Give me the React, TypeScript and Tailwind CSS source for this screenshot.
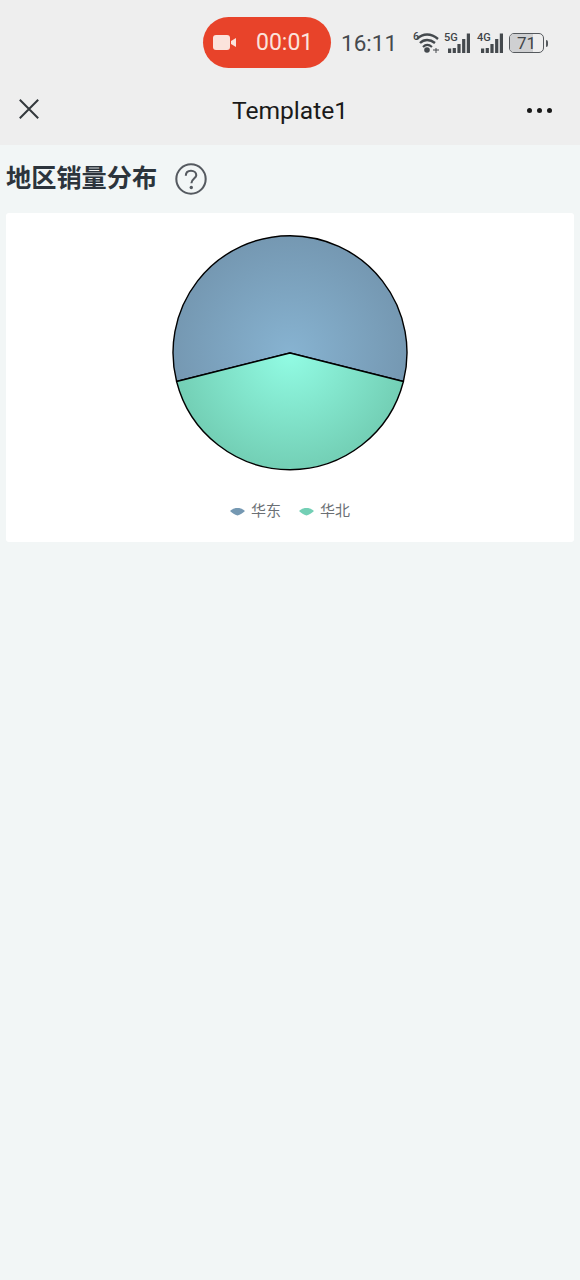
const cjk = "font-['Roboto','Noto_Sans_CJK_SC',sans-serif]";

function SignalBars({ label }: { label: string }) {
  return (
    <div className="relative h-[20px] w-[26px]">
      <span className="absolute left-0 top-[-1px] font-['Roboto',sans-serif] text-[11px] font-medium leading-[12px] text-[#3f4448]">
        {label}
      </span>
      <svg width="26" height="20" viewBox="0 0 26 20" className="absolute left-0 top-0">
        <rect x="4" y="15.5" width="3.2" height="4.5" fill="#44494d" />
        <rect x="8.7" y="15" width="3.2" height="5" fill="#44494d" />
        <rect x="13.4" y="11" width="3.2" height="9" fill="#44494d" />
        <rect x="18.1" y="6" width="3.2" height="14" fill="#44494d" />
        <rect x="22.8" y="0.5" width="3.2" height="19.5" fill="#44494d" />
      </svg>
    </div>
  );
}

function StatusBar() {
  return (
    <div className="flex h-[80px] items-start bg-[#eeeeee] pl-[203px] pt-[17px]">
      <div className="flex h-[51px] w-[128px] items-center rounded-full bg-[#e8432a] pl-[10px]">
        <svg width="24" height="18" viewBox="0 0 24 18">
          <rect x="0" y="1" width="17" height="15" rx="3" fill="#fbe3dc" />
          <path d="M18 7 L23 4 V13 L18 10 Z" fill="#fbe3dc" />
        </svg>
        <span className="ml-[19px] font-['Roboto',sans-serif] text-[23px] leading-none text-[#fbe3dc]">00:01</span>
      </div>
      <span className="ml-[10px] mt-[13px] font-['Roboto',sans-serif] text-[22.5px] leading-[26px] text-[#45494d]">16:11</span>
      <div className="ml-[16px] mt-[16px] flex items-center">
        <div className="relative h-[20px] w-[26px]">
          <span className="absolute left-0 top-[-2px] font-['Roboto',sans-serif] text-[11px] font-medium leading-[12px] text-[#3f4448]">6</span>
          <svg width="26" height="20" viewBox="0 0 26 20" className="absolute left-0 top-0">
            <path d="M4 6 C10 0 18 0 25 6" fill="none" stroke="#44494d" strokeWidth="2.4" />
            <path d="M7 10 C11 6 17 6 22 10" fill="none" stroke="#44494d" strokeWidth="2.4" />
            <path d="M10 14 C12.5 11.5 16 11.5 19 14" fill="none" stroke="#44494d" strokeWidth="2.2" />
            <circle cx="14" cy="17" r="2.8" fill="#44494d" />
            <path d="M20 17 h6 M23 15 v5" stroke="#44494d" strokeWidth="1" />
          </svg>
        </div>
        <div className="ml-[5px]">
          <SignalBars label="5G" />
        </div>
        <div className="ml-[7px]">
          <SignalBars label="4G" />
        </div>
        <div className="ml-[6px] flex items-center">
          <div className="relative flex h-[20px] w-[35px] items-center justify-center overflow-hidden rounded-[5px] border-[1.5px] border-[#55595d] bg-[#eeeeee]">
            <div className="absolute bottom-0 left-0 top-0 w-[71%] bg-[#cfd0d2]" />
            <span className="relative font-['Roboto',sans-serif] text-[17px] leading-none text-[#3f4448]">71</span>
          </div>
          <div className="ml-[2px] h-[7px] w-[2px] rounded-r-sm bg-[#55595d]" />
        </div>
      </div>
    </div>
  );
}

function NavBar() {
  return (
    <div className="flex h-[65px] items-start justify-between bg-[#eeeeee] pl-[19px] pr-[28px] pt-[19px]">
      <svg width="20" height="20" viewBox="0 0 20 20">
        <path d="M0.8 0.8 L19.2 19.2 M19.2 0.8 L0.8 19.2" fill="none" stroke="#33383c" strokeWidth="2" />
      </svg>
      <span className="ml-[14px] mt-[1px] font-['Roboto',sans-serif] text-[24.6px] leading-[22px] text-[#1a1a1a]">Template1</span>
      <div className="mt-[9px] flex gap-[5px]">
        <div className="h-[5px] w-[5px] rounded-full bg-[#1a1a1a]" />
        <div className="h-[5px] w-[5px] rounded-full bg-[#1a1a1a]" />
        <div className="h-[5px] w-[5px] rounded-full bg-[#1a1a1a]" />
      </div>
    </div>
  );
}

function HelpIcon() {
  return (
    <svg width="32" height="32" viewBox="0 0 34 34">
      <circle cx="17" cy="17" r="15.6" fill="none" stroke="#555a60" strokeWidth="2.2" />
      <path
        d="M11.5 13.5 C11.5 10 14 8.2 17 8.2 C20.2 8.2 22.6 10.2 22.6 13 C22.6 16.4 17.4 16.8 17.4 21.5"
        fill="none"
        stroke="#555a60"
        strokeWidth="2.2"
      />
      <circle cx="17.3" cy="26" r="1.8" fill="#555a60" />
    </svg>
  );
}

function PieChart() {
  return (
    <svg width="240" height="240" viewBox="0 0 240 240">
      <defs>
        <radialGradient id="blue" gradientUnits="userSpaceOnUse" cx="120" cy="120" r="117">
          <stop offset="0" stopColor="#87b3d1" />
          <stop offset="1" stopColor="#7598b2" />
        </radialGradient>
        <radialGradient id="green" gradientUnits="userSpaceOnUse" cx="120" cy="120" r="117">
          <stop offset="0" stopColor="#92fce4" />
          <stop offset="1" stopColor="#73cfb5" />
        </radialGradient>
      </defs>
      <path
        d="M120 120 L6.6 148.5 A117 117 0 1 1 233.4 148.5 Z"
        fill="url(#blue)"
        stroke="#000"
        strokeWidth="1.4"
        strokeLinejoin="round"
      />
      <path
        d="M120 120 L233.4 148.5 A117 117 0 0 1 6.6 148.5 Z"
        fill="url(#green)"
        stroke="#000"
        strokeWidth="1.4"
        strokeLinejoin="round"
      />
    </svg>
  );
}

function LegendItem({ color, label }: { color: string; label: string }) {
  return (
    <div className="flex items-center gap-[6px]">
      <svg width="15" height="9" viewBox="0 0 15 9">
        <path d="M0 4 C4 0 11 0 15 4 C12.5 6 10.5 8 7.5 8.5 C4.5 8 2.5 6 0 4 Z" fill={color} />
      </svg>
      <span className="text-[15px] leading-[18px] text-[#6b7075]">{label}</span>
    </div>
  );
}

export default function App() {
  return (
    <div className={`flex h-[1280px] w-[580px] flex-col overflow-hidden bg-[#f2f6f6] ${cjk}`}>
      <StatusBar />
      <NavBar />
      <div className="flex h-[68px] items-center pl-[6px]">
        <h1 className="text-[25.2px] font-bold leading-none text-[#2c343c]">地区销量分布</h1>
        <div className="ml-[18px]">
          <HelpIcon />
        </div>
      </div>
      <div className="mx-[6px] flex h-[329px] flex-col items-center rounded-[3px] bg-white pt-[20px]">
        <PieChart />
        <div className="mt-[29px] flex gap-[18px]">
          <LegendItem color="#7598b2" label="华东" />
          <LegendItem color="#73cfb5" label="华北" />
        </div>
      </div>
    </div>
  );
}
